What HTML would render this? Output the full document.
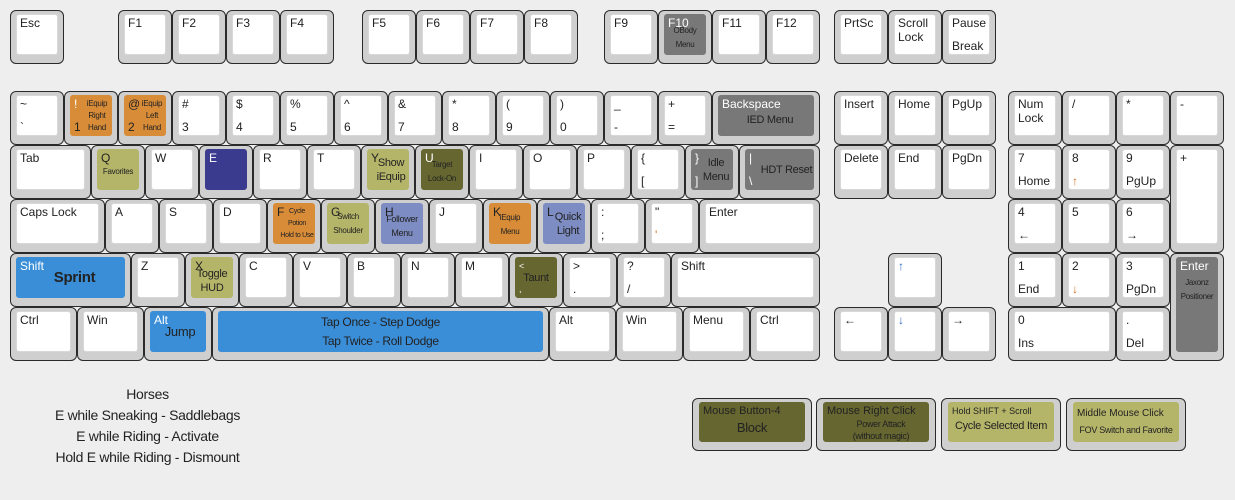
<!DOCTYPE html>
<html><head><meta charset="utf-8"><style>
body{margin:0;width:1235px;height:500px;background:#eeeeee;position:relative;overflow:hidden;font-family:"Liberation Sans",sans-serif}
.k{position:absolute;height:54px;background:#cfcfcf;border:1px solid #2a2a2a;border-radius:6px;box-sizing:border-box}
.f{position:absolute;left:5px;top:3px;right:5px;bottom:8px;background:#fff;border-radius:3px;border:1px solid #d8d8d8;font-size:12px;color:#222;overflow:hidden}
.t{position:absolute;left:3px;top:1px;line-height:14px}
.b{position:absolute;left:3px;top:24px;line-height:14px}
.c{position:absolute;left:0;right:0;top:0;bottom:0;display:flex;flex-direction:column;align-items:center;justify-content:center;text-align:center;font-size:10px;line-height:14px;color:#222;white-space:nowrap;letter-spacing:-0.3px}
.o{background:#d98c38;border-color:#d98c38}.y{background:#b5b56a;border-color:#b5b56a}.d{background:#666631;border-color:#666631}
.n{background:#3a3a8e;border-color:#3a3a8e}.p{background:#7d8cc2;border-color:#7d8cc2}.g{background:#787878;border-color:#787878}.s{background:#3a8ed8;border-color:#3a8ed8}
.w{color:#fff}
.txt{position:absolute;left:0;width:295px;text-align:center;font-size:14px;color:#222;line-height:21px;top:384px;letter-spacing:-0.3px}
</style></head><body>
<!-- row 0 -->
<div class="k" style="left:10px;top:10px;width:54px"><div class="f"><span class="t">Esc</span></div></div>
<div class="k" style="left:118px;top:10px;width:54px"><div class="f"><span class="t">F1</span></div></div>
<div class="k" style="left:172px;top:10px;width:54px"><div class="f"><span class="t">F2</span></div></div>
<div class="k" style="left:226px;top:10px;width:54px"><div class="f"><span class="t">F3</span></div></div>
<div class="k" style="left:280px;top:10px;width:54px"><div class="f"><span class="t">F4</span></div></div>
<div class="k" style="left:362px;top:10px;width:54px"><div class="f"><span class="t">F5</span></div></div>
<div class="k" style="left:416px;top:10px;width:54px"><div class="f"><span class="t">F6</span></div></div>
<div class="k" style="left:470px;top:10px;width:54px"><div class="f"><span class="t">F7</span></div></div>
<div class="k" style="left:524px;top:10px;width:54px"><div class="f"><span class="t">F8</span></div></div>
<div class="k" style="left:604px;top:10px;width:54px"><div class="f"><span class="t">F9</span></div></div>
<div class="k" style="left:658px;top:10px;width:54px"><div class="f g"><span class="t w">F10</span><div class="c" style="font-size:8px;padding-top:6px">OBody<br>Menu</div></div></div>
<div class="k" style="left:712px;top:10px;width:54px"><div class="f"><span class="t">F11</span></div></div>
<div class="k" style="left:766px;top:10px;width:54px"><div class="f"><span class="t">F12</span></div></div>
<div class="k" style="left:834px;top:10px;width:54px"><div class="f"><span class="t">PrtSc</span></div></div>
<div class="k" style="left:888px;top:10px;width:54px"><div class="f"><span class="t">Scroll<br>Lock</span></div></div>
<div class="k" style="left:942px;top:10px;width:54px"><div class="f"><span class="t">Pause</span><span class="b">Break</span></div></div>
<!-- row 1 -->
<div class="k" style="left:10px;top:91px;width:54px"><div class="f"><span class="t">~</span><span class="b">`</span></div></div>
<div class="k" style="left:64px;top:91px;width:54px"><div class="f o"><span class="t w">!</span><span class="b">1</span><div class="c" style="font-size:8px;line-height:12px;padding-left:12px">iEquip<br>Right<br>Hand</div></div></div>
<div class="k" style="left:118px;top:91px;width:54px"><div class="f o"><span class="t">@</span><span class="b">2</span><div class="c" style="font-size:8px;line-height:12px;padding-left:14px">iEquip<br>Left<br>Hand</div></div></div>
<div class="k" style="left:172px;top:91px;width:54px"><div class="f"><span class="t">#</span><span class="b">3</span></div></div>
<div class="k" style="left:226px;top:91px;width:54px"><div class="f"><span class="t">$</span><span class="b">4</span></div></div>
<div class="k" style="left:280px;top:91px;width:54px"><div class="f"><span class="t">%</span><span class="b">5</span></div></div>
<div class="k" style="left:334px;top:91px;width:54px"><div class="f"><span class="t">^</span><span class="b">6</span></div></div>
<div class="k" style="left:388px;top:91px;width:54px"><div class="f"><span class="t">&amp;</span><span class="b">7</span></div></div>
<div class="k" style="left:442px;top:91px;width:54px"><div class="f"><span class="t">*</span><span class="b">8</span></div></div>
<div class="k" style="left:496px;top:91px;width:54px"><div class="f"><span class="t">(</span><span class="b">9</span></div></div>
<div class="k" style="left:550px;top:91px;width:54px"><div class="f"><span class="t">)</span><span class="b">0</span></div></div>
<div class="k" style="left:604px;top:91px;width:54px"><div class="f"><span class="t">_</span><span class="b">-</span></div></div>
<div class="k" style="left:658px;top:91px;width:54px"><div class="f"><span class="t">+</span><span class="b">=</span></div></div>
<div class="k" style="left:712px;top:91px;width:108px"><div class="f g"><span class="t w">Backspace</span><div class="c" style="font-size:11px;padding-top:8px;padding-left:8px">IED Menu</div></div></div>
<div class="k" style="left:834px;top:91px;width:54px"><div class="f"><span class="t">Insert</span></div></div>
<div class="k" style="left:888px;top:91px;width:54px"><div class="f"><span class="t">Home</span></div></div>
<div class="k" style="left:942px;top:91px;width:54px"><div class="f"><span class="t">PgUp</span></div></div>
<div class="k" style="left:1008px;top:91px;width:54px"><div class="f"><span class="t">Num<br>Lock</span></div></div>
<div class="k" style="left:1062px;top:91px;width:54px"><div class="f"><span class="t">/</span></div></div>
<div class="k" style="left:1116px;top:91px;width:54px"><div class="f"><span class="t">*</span></div></div>
<div class="k" style="left:1170px;top:91px;width:54px"><div class="f"><span class="t">-</span></div></div>
<!-- row 2 -->
<div class="k" style="left:10px;top:145px;width:81px"><div class="f"><span class="t">Tab</span></div></div>
<div class="k" style="left:91px;top:145px;width:54px"><div class="f y"><span class="t">Q</span><div class="c" style="font-size:8px;padding-top:4px">Favorites</div></div></div>
<div class="k" style="left:145px;top:145px;width:54px"><div class="f"><span class="t">W</span></div></div>
<div class="k" style="left:199px;top:145px;width:54px"><div class="f n"><span class="t w">E</span></div></div>
<div class="k" style="left:253px;top:145px;width:54px"><div class="f"><span class="t">R</span></div></div>
<div class="k" style="left:307px;top:145px;width:54px"><div class="f"><span class="t">T</span></div></div>
<div class="k" style="left:361px;top:145px;width:54px"><div class="f y"><span class="t">Y</span><div class="c" style="font-size:11px;padding-left:6px">Show<br>iEquip</div></div></div>
<div class="k" style="left:415px;top:145px;width:54px"><div class="f d"><span class="t w">U</span><div class="c" style="font-size:8px;padding-top:4px">Target<br>Lock-On</div></div></div>
<div class="k" style="left:469px;top:145px;width:54px"><div class="f"><span class="t">I</span></div></div>
<div class="k" style="left:523px;top:145px;width:54px"><div class="f"><span class="t">O</span></div></div>
<div class="k" style="left:577px;top:145px;width:54px"><div class="f"><span class="t">P</span></div></div>
<div class="k" style="left:631px;top:145px;width:54px"><div class="f"><span class="t">{</span><span class="b">[</span></div></div>
<div class="k" style="left:685px;top:145px;width:54px"><div class="f g"><span class="t w">}</span><span class="b w">]</span><div class="c" style="font-size:11px;padding-left:8px">Idle<br>Menu</div></div></div>
<div class="k" style="left:739px;top:145px;width:81px"><div class="f g"><span class="t w">|</span><span class="b w">\</span><div class="c" style="font-size:11px;padding-left:14px">HDT Reset</div></div></div>
<div class="k" style="left:834px;top:145px;width:54px"><div class="f"><span class="t">Delete</span></div></div>
<div class="k" style="left:888px;top:145px;width:54px"><div class="f"><span class="t">End</span></div></div>
<div class="k" style="left:942px;top:145px;width:54px"><div class="f"><span class="t">PgDn</span></div></div>
<div class="k" style="left:1008px;top:145px;width:54px"><div class="f"><span class="t">7</span><span class="b">Home</span></div></div>
<div class="k" style="left:1062px;top:145px;width:54px"><div class="f"><span class="t">8</span><span class="b" style="color:#d07020">↑</span></div></div>
<div class="k" style="left:1116px;top:145px;width:54px"><div class="f"><span class="t">9</span><span class="b">PgUp</span></div></div>
<div class="k" style="left:1170px;top:145px;width:54px;height:108px"><div class="f"><span class="t">+</span></div></div>
<!-- row 3 -->
<div class="k" style="left:10px;top:199px;width:95px"><div class="f"><span class="t">Caps Lock</span></div></div>
<div class="k" style="left:105px;top:199px;width:54px"><div class="f"><span class="t">A</span></div></div>
<div class="k" style="left:159px;top:199px;width:54px"><div class="f"><span class="t">S</span></div></div>
<div class="k" style="left:213px;top:199px;width:54px"><div class="f"><span class="t">D</span></div></div>
<div class="k" style="left:267px;top:199px;width:54px"><div class="f o"><span class="t">F</span><div class="c" style="font-size:7px;line-height:12px;padding-left:6px">Cycle<br>Potion<br>Hold to Use</div></div></div>
<div class="k" style="left:321px;top:199px;width:54px"><div class="f y"><span class="t">G</span><div class="c" style="font-size:8px">Switch<br>Shoulder</div></div></div>
<div class="k" style="left:375px;top:199px;width:54px"><div class="f p"><span class="t">H</span><div class="c" style="font-size:9px;padding-top:4px">Follower<br>Menu</div></div></div>
<div class="k" style="left:429px;top:199px;width:54px"><div class="f"><span class="t">J</span></div></div>
<div class="k" style="left:483px;top:199px;width:54px"><div class="f o"><span class="t">K</span><div class="c" style="font-size:8px;padding-top:2px">iEquip<br>Menu</div></div></div>
<div class="k" style="left:537px;top:199px;width:54px"><div class="f p"><span class="t">L</span><div class="c" style="font-size:11px;padding-left:8px">Quick<br>Light</div></div></div>
<div class="k" style="left:591px;top:199px;width:54px"><div class="f"><span class="t">:</span><span class="b">;</span></div></div>
<div class="k" style="left:645px;top:199px;width:54px"><div class="f"><span class="t">"</span><span class="b" style="color:#d07020">'</span></div></div>
<div class="k" style="left:699px;top:199px;width:121px"><div class="f"><span class="t">Enter</span></div></div>
<div class="k" style="left:1008px;top:199px;width:54px"><div class="f"><span class="t">4</span><span class="b">←</span></div></div>
<div class="k" style="left:1062px;top:199px;width:54px"><div class="f"><span class="t">5</span></div></div>
<div class="k" style="left:1116px;top:199px;width:54px"><div class="f"><span class="t">6</span><span class="b">→</span></div></div>
<!-- row 4 -->
<div class="k" style="left:10px;top:253px;width:121px"><div class="f s"><span class="t w">Shift</span><div class="c" style="font-size:15px;font-weight:bold;padding-left:8px">Sprint</div></div></div>
<div class="k" style="left:131px;top:253px;width:54px"><div class="f"><span class="t">Z</span></div></div>
<div class="k" style="left:185px;top:253px;width:54px"><div class="f y"><span class="t">X</span><div class="c" style="font-size:11px;padding-top:6px">Toggle<br>HUD</div></div></div>
<div class="k" style="left:239px;top:253px;width:54px"><div class="f"><span class="t">C</span></div></div>
<div class="k" style="left:293px;top:253px;width:54px"><div class="f"><span class="t">V</span></div></div>
<div class="k" style="left:347px;top:253px;width:54px"><div class="f"><span class="t">B</span></div></div>
<div class="k" style="left:401px;top:253px;width:54px"><div class="f"><span class="t">N</span></div></div>
<div class="k" style="left:455px;top:253px;width:54px"><div class="f"><span class="t">M</span></div></div>
<div class="k" style="left:509px;top:253px;width:54px"><div class="f d"><span class="t w" style="font-size:9px">&lt;</span><span class="b w" style="font-size:9px">,</span><div class="c" style="font-size:11px">Taunt</div></div></div>
<div class="k" style="left:563px;top:253px;width:54px"><div class="f"><span class="t">&gt;</span><span class="b">.</span></div></div>
<div class="k" style="left:617px;top:253px;width:54px"><div class="f"><span class="t">?</span><span class="b">/</span></div></div>
<div class="k" style="left:671px;top:253px;width:149px"><div class="f"><span class="t">Shift</span></div></div>
<div class="k" style="left:888px;top:253px;width:54px"><div class="f"><span class="t" style="color:#2a6fc0">↑</span></div></div>
<div class="k" style="left:1008px;top:253px;width:54px"><div class="f"><span class="t">1</span><span class="b">End</span></div></div>
<div class="k" style="left:1062px;top:253px;width:54px"><div class="f"><span class="t">2</span><span class="b" style="color:#d07020">↓</span></div></div>
<div class="k" style="left:1116px;top:253px;width:54px"><div class="f"><span class="t">3</span><span class="b">PgDn</span></div></div>
<div class="k" style="left:1170px;top:253px;width:54px;height:108px"><div class="f g"><span class="t w">Enter</span><div class="c" style="font-size:8px;justify-content:flex-start;padding-top:18px">Jaxonz<br>Positioner</div></div></div>
<!-- row 5 -->
<div class="k" style="left:10px;top:307px;width:67px"><div class="f"><span class="t">Ctrl</span></div></div>
<div class="k" style="left:77px;top:307px;width:67px"><div class="f"><span class="t">Win</span></div></div>
<div class="k" style="left:144px;top:307px;width:68px"><div class="f s"><span class="t w">Alt</span><div class="c" style="font-size:13px;padding-left:4px">Jump</div></div></div>
<div class="k" style="left:212px;top:307px;width:337px"><div class="f s"><div class="c" style="font-size:12px;line-height:19px">Tap Once - Step Dodge<br>Tap Twice - Roll Dodge</div></div></div>
<div class="k" style="left:549px;top:307px;width:67px"><div class="f"><span class="t">Alt</span></div></div>
<div class="k" style="left:616px;top:307px;width:67px"><div class="f"><span class="t">Win</span></div></div>
<div class="k" style="left:683px;top:307px;width:67px"><div class="f"><span class="t">Menu</span></div></div>
<div class="k" style="left:750px;top:307px;width:70px"><div class="f"><span class="t">Ctrl</span></div></div>
<div class="k" style="left:834px;top:307px;width:54px"><div class="f"><span class="t">←</span></div></div>
<div class="k" style="left:888px;top:307px;width:54px"><div class="f"><span class="t" style="color:#2a6fc0">↓</span></div></div>
<div class="k" style="left:942px;top:307px;width:54px"><div class="f"><span class="t">→</span></div></div>
<div class="k" style="left:1008px;top:307px;width:108px"><div class="f"><span class="t">0</span><span class="b">Ins</span></div></div>
<div class="k" style="left:1116px;top:307px;width:54px"><div class="f"><span class="t">.</span><span class="b">Del</span></div></div>
<!-- bottom -->
<div class="txt">Horses<br>E while Sneaking - Saddlebags<br>E while Riding - Activate<br>Hold E while Riding - Dismount</div>
<div class="k" style="left:692px;top:398px;width:120px;height:53px"><div class="f d" style="left:6px;top:3px;right:6px;bottom:8px"><span class="t" style="font-size:11px">Mouse Button-4</span><div class="c" style="font-size:13px;padding-top:12px">Block</div></div></div>
<div class="k" style="left:816px;top:398px;width:120px;height:53px"><div class="f d" style="left:6px;top:3px;right:6px;bottom:8px"><span class="t" style="font-size:11px">Mouse Right Click</span><div class="c" style="font-size:9px;line-height:12px;padding-top:16px;padding-left:10px">Power Attack<br>(without magic)</div></div></div>
<div class="k" style="left:941px;top:398px;width:120px;height:53px"><div class="f y" style="left:6px;top:3px;right:6px;bottom:8px"><span class="t" style="font-size:9px">Hold SHIFT + Scroll</span><div class="c" style="font-size:11px;padding-top:8px">Cycle Selected Item</div></div></div>
<div class="k" style="left:1066px;top:398px;width:120px;height:53px"><div class="f y" style="left:6px;top:3px;right:6px;bottom:8px"><span class="t" style="font-size:10px;top:4px">Middle Mouse Click</span><div class="c" style="font-size:9px;padding-top:16px">FOV Switch and Favorite</div></div></div>
</body></html>
